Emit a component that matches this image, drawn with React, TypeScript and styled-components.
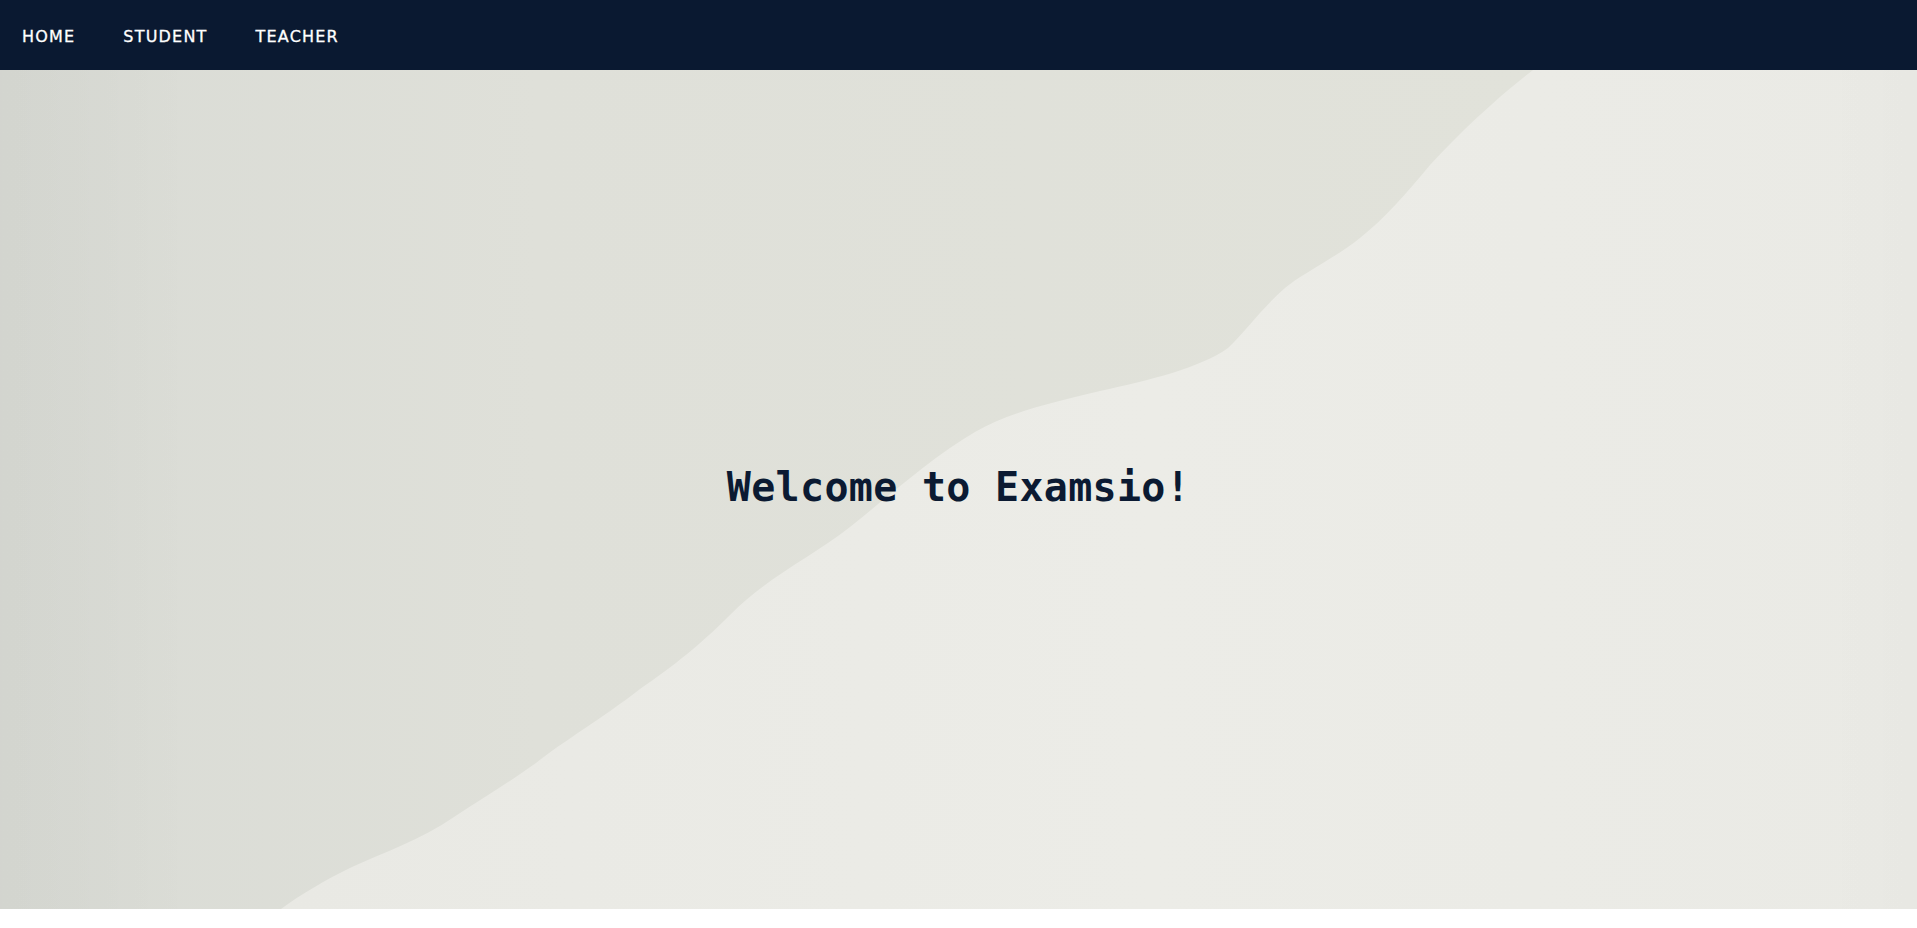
import React from "react";
import styled, { createGlobalStyle } from "styled-components";

const GlobalStyle = createGlobalStyle`
  html, body { margin: 0; padding: 0; background: #ffffff; }
  body { font-family: "DejaVu Sans", sans-serif; }
  * { box-sizing: border-box; }
`;

const Page = styled.div`
  display: flex;
  flex-direction: column;
  width: 100%;
`;

const NavBar = styled.nav`
  height: 70px;
  background: #0a1931;
  display: flex;
  align-items: center;
  padding: 0 0 0 22px;
  gap: 48px;
`;

const NavLink = styled.a`
  color: #ffffff;
  font-family: "DejaVu Sans", "Noto Sans", sans-serif;
  font-size: 16px;
  font-weight: normal;
  letter-spacing: 1.2px;
  text-transform: uppercase;
  text-decoration: none;
  line-height: 1;
  margin-top: 4px;
  cursor: pointer;
  -webkit-text-stroke: 0.3px #ffffff;
`;

const Hero = styled.section`
  position: relative;
  height: 839px;
  display: flex;
  align-items: center;
  justify-content: center;
  overflow: hidden;
  background: linear-gradient(90deg, #e8e8e3 0%, #ecece7 60%, #eaeae5 100%);
`;

const Backdrop = styled.svg`
  position: absolute;
  inset: 0;
  width: 100%;
  height: 100%;
  pointer-events: none;
`;

const Title = styled.h1`
  position: relative;
  margin: 0 0 6px 0;
  font-family: "DejaVu Sans Mono", "Liberation Mono", monospace;
  font-weight: bold;
  font-size: 40px;
  color: #0b1a32;
  letter-spacing: 0.3px;
`;

const Footer = styled.div`
  height: 19px;
  background: #ffffff;
`;

export default function App() {
  return (
    <>
      <GlobalStyle />
      <Page>
        <NavBar>
          <NavLink>Home</NavLink>
          <NavLink>Student</NavLink>
          <NavLink>Teacher</NavLink>
        </NavBar>
        <Hero>
          <Backdrop viewBox="0 0 1917 839" preserveAspectRatio="none">
            <defs>
              <linearGradient id="darkside" x1="0" y1="0" x2="1" y2="0">
                <stop offset="0" stopColor="#d9dbd5" />
                <stop offset="0.35" stopColor="#dfe0d9" />
                <stop offset="1" stopColor="#e1e2da" />
              </linearGradient>
              <linearGradient id="vign" x1="0" y1="0" x2="1" y2="0">
                <stop offset="0" stopColor="#000" stopOpacity="0.03" />
                <stop offset="0.1" stopColor="#000" stopOpacity="0" />
                <stop offset="0.95" stopColor="#000" stopOpacity="0" />
                <stop offset="1" stopColor="#000" stopOpacity="0.01" />
              </linearGradient>
            </defs>
            <path
              d="M0 0 L1533 0 C1500 25 1460 62 1430 95 C1405 125 1385 148 1360 168 C1335 188 1300 205 1285 218 C1262 238 1245 262 1228 278 C1200 298 1150 310 1100 321 C1050 333 1010 342 975 362 C935 385 890 425 850 457 C812 487 770 505 730 545 C700 575 675 595 640 619 C600 650 565 670 536 693 C505 715 480 730 454 747 C420 770 385 782 352 797 C325 810 300 825 281 839 L0 839 Z"
              fill="url(#darkside)"
            />
            <rect x="0" y="0" width="1917" height="839" fill="url(#vign)" />
          </Backdrop>
          <Title>Welcome to Examsio!</Title>
        </Hero>
        <Footer />
      </Page>
    </>
  );
}
